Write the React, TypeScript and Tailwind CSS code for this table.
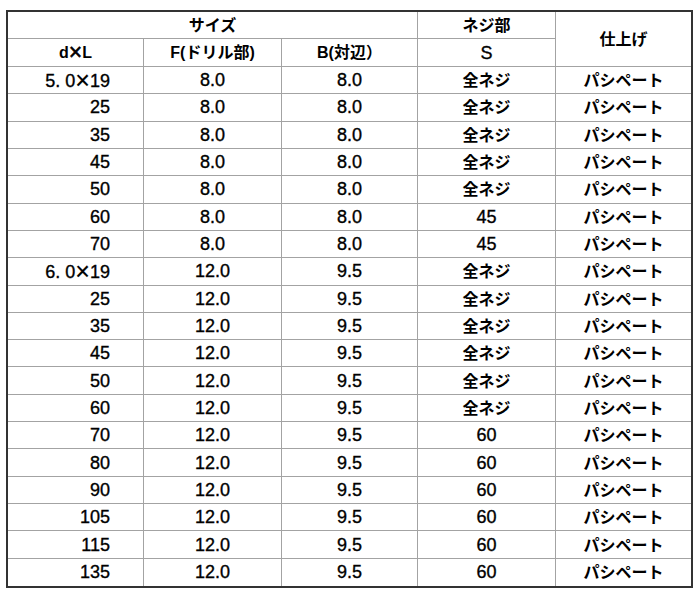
import React from "react";

const rows: [string, string, string, string][] = [
  ["5. 0×19", "8.0", "8.0", "全ネジ"],
  ["25", "8.0", "8.0", "全ネジ"],
  ["35", "8.0", "8.0", "全ネジ"],
  ["45", "8.0", "8.0", "全ネジ"],
  ["50", "8.0", "8.0", "全ネジ"],
  ["60", "8.0", "8.0", "45"],
  ["70", "8.0", "8.0", "45"],
  ["6. 0×19", "12.0", "9.5", "全ネジ"],
  ["25", "12.0", "9.5", "全ネジ"],
  ["35", "12.0", "9.5", "全ネジ"],
  ["45", "12.0", "9.5", "全ネジ"],
  ["50", "12.0", "9.5", "全ネジ"],
  ["60", "12.0", "9.5", "全ネジ"],
  ["70", "12.0", "9.5", "60"],
  ["80", "12.0", "9.5", "60"],
  ["90", "12.0", "9.5", "60"],
  ["105", "12.0", "9.5", "60"],
  ["115", "12.0", "9.5", "60"],
  ["135", "12.0", "9.5", "60"],
];

const num = "font-['Liberation_Sans',Arial,sans-serif] text-[18px] leading-none text-black [-webkit-text-stroke:0.35px_black]";
const jp = "font-['Noto_Sans_CJK_JP',sans-serif] font-bold text-[16px] leading-none text-black pb-[2px]";
const hd = "font-['Liberation_Sans','Noto_Sans_CJK_JP',sans-serif] font-bold text-[16px] leading-none text-black";
const line = "border-[#a3a3a3]";

function DL({ v }: { v: string }) {
  const i = v.indexOf("×");
  if (i < 0) return <span>{v}</span>;
  return (
    <span className="leading-none">
      {v.slice(0, i)}
      <span className="text-[25px] leading-none align-[-2px] [-webkit-text-stroke:0.2px_black]">×</span>
      {v.slice(i + 1)}
    </span>
  );
}

export default function App() {
  return (
    <div className="w-[700px] h-[600px] bg-white pt-[10px] pl-[6px]">
      <div className="w-[687px] h-[578px] border-2 border-[#333] grid grid-cols-[136px_138px_136px_138px_135px] grid-rows-[27px_28px_repeat(19,minmax(0,1fr))]">
        <div className={`col-span-3 flex items-center justify-center border-r border-b ${line} ${jp}`}>サイズ</div>
        <div className={`flex items-center justify-center border-r border-b ${line} ${jp}`}>ネジ部</div>
        <div className={`row-span-2 flex items-center justify-center border-b ${line} ${jp}`}>仕上げ</div>
        <div className={`flex items-center justify-center border-r border-b ${line} ${hd}`}>
          <span className="leading-none">
            d<span className="text-[23px] font-normal leading-none align-[-2px] [-webkit-text-stroke:0.6px_black]">×</span>L
          </span>
        </div>
        <div className={`flex items-center justify-center border-r border-b ${line} ${hd}`}>F(ドリル部)</div>
        <div className={`flex items-center justify-center border-r border-b ${line} ${hd}`}>B(対辺）</div>
        <div className={`flex items-center justify-center border-r border-b ${line} ${num}`}>S</div>
        {rows.map((r, i) => {
          const last = i === rows.length - 1;
          const bb = last ? "" : "border-b";
          return (
            <React.Fragment key={i}>
              <div className={`flex items-center justify-end pr-[33px] border-r ${bb} ${line} whitespace-pre ${num}`}>
                <DL v={r[0]} />
              </div>
              <div className={`flex items-center justify-center border-r ${bb} ${line} ${num}`}>{r[1]}</div>
              <div className={`flex items-center justify-center border-r ${bb} ${line} ${num}`}>{r[2]}</div>
              <div className={`flex items-center justify-center border-r ${bb} ${line} ${r[3] === "全ネジ" ? jp : num}`}>{r[3]}</div>
              <div className={`flex items-center justify-center ${bb} ${line} ${jp}`}>パシペート</div>
            </React.Fragment>
          );
        })}
      </div>
    </div>
  );
}
